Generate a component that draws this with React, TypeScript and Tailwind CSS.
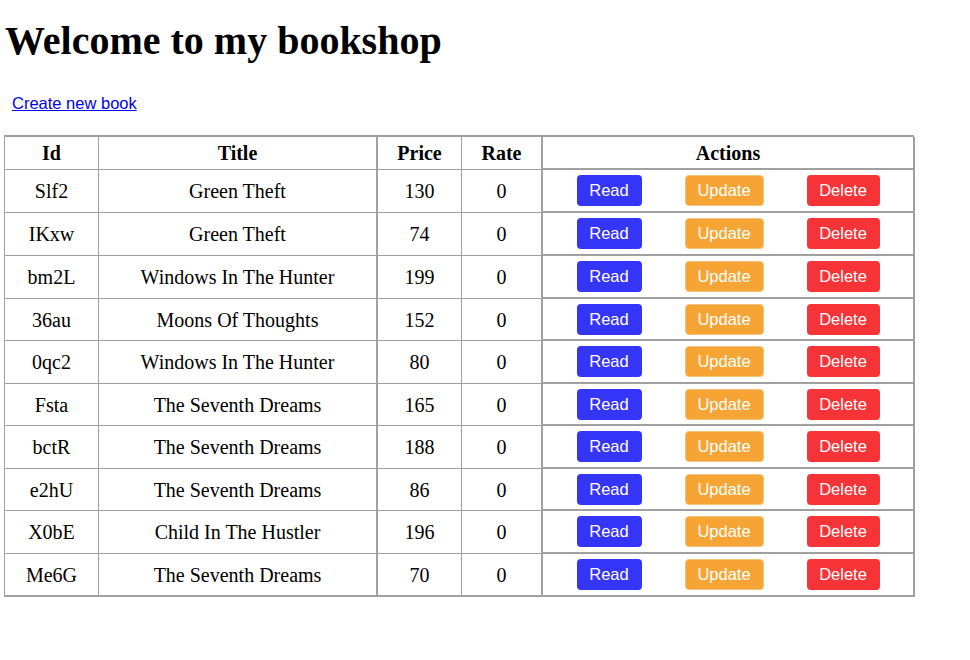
import React from "react";

const books = [
  { id: "Slf2", title: "Green Theft", price: 130, rate: 0 },
  { id: "IKxw", title: "Green Theft", price: 74, rate: 0 },
  { id: "bm2L", title: "Windows In The Hunter", price: 199, rate: 0 },
  { id: "36au", title: "Moons Of Thoughts", price: 152, rate: 0 },
  { id: "0qc2", title: "Windows In The Hunter", price: 80, rate: 0 },
  { id: "Fsta", title: "The Seventh Dreams", price: 165, rate: 0 },
  { id: "bctR", title: "The Seventh Dreams", price: 188, rate: 0 },
  { id: "e2hU", title: "The Seventh Dreams", price: 86, rate: 0 },
  { id: "X0bE", title: "Child In The Hustler", price: 196, rate: 0 },
  { id: "Me6G", title: "The Seventh Dreams", price: 70, rate: 0 },
];

const heights = [43, 43, 43, 42, 43, 42, 43, 42, 43, 43];

export default function App() {
  return (
    <div className="min-h-[660px] bg-white text-black" style={{ fontFamily: '"Liberation Serif", "Times New Roman", serif' }}>
      <h1 className="pl-[5px] pt-[18px] text-[40px] font-bold leading-[46px]">Welcome to my bookshop</h1>
      <div className="mt-[27px] pl-[12px]">
        <a href="#" className="text-[16.5px] text-[#0000ee] underline" style={{ fontFamily: '"Liberation Sans", Arial, sans-serif' }}>
          Create new book
        </a>
      </div>
      <div className="ml-[4px] mt-[19px] w-[910px] border-t-2 border-l border-[#a0a0a0]">
        <div className="grid grid-cols-[94px_279px_84px_81px_372px]">
          <div className="flex h-[33px] items-center justify-center border-b border-r border-[#a0a0a0] text-[20px] font-bold">Id</div>
          <div className="flex h-[33px] items-center justify-center border-b border-r-2 border-[#a0a0a0] text-[20px] font-bold">Title</div>
          <div className="flex h-[33px] items-center justify-center border-b border-r border-[#a0a0a0] text-[20px] font-bold">Price</div>
          <div className="flex h-[33px] items-center justify-center border-b border-r-2 border-[#a0a0a0] text-[20px] font-bold">Rate</div>
          <div className="flex h-[33px] items-center justify-center border-b-2 border-r-2 border-[#a0a0a0] text-[20px] font-bold">Actions</div>
        </div>
        {books.map((b, i) => (
          <div
            key={b.id}
            className={`grid grid-cols-[94px_279px_84px_81px_372px] ${heights[i] === 43 ? "h-[43px]" : "h-[42px]"}`}
          >
            <div className={`flex items-center justify-center border-r border-[#a0a0a0] text-[20px] ${i === 9 ? "border-b-2" : "border-b"}`}>{b.id}</div>
            <div className={`flex items-center justify-center border-r-2 border-[#a0a0a0] text-[20px] ${i === 9 ? "border-b-2" : "border-b"}`}>{b.title}</div>
            <div className={`flex items-center justify-center border-r border-[#a0a0a0] text-[20px] ${i === 9 ? "border-b-2" : "border-b"}`}>{b.price}</div>
            <div className={`flex items-center justify-center border-r-2 border-[#a0a0a0] text-[20px] ${i === 9 ? "border-b-2" : "border-b"}`}>{b.rate}</div>
            <div
              className="flex items-center justify-around border-b-2 border-r-2 border-[#a0a0a0] px-3 text-[16.5px] text-white"
              style={{ fontFamily: '"Liberation Sans", Arial, sans-serif' }}
            >
              <button className="flex h-[31px] w-[65px] items-center justify-center rounded-[4px] bg-[#3535f7]">Read</button>
              <button className="flex h-[31px] w-[79px] items-center justify-center rounded-[4px] border border-[#f3c27c] bg-[#f6a535]">Update</button>
              <button className="flex h-[31px] w-[73px] items-center justify-center rounded-[4px] bg-[#f63336]">Delete</button>
            </div>
          </div>
        ))}
      </div>
    </div>
  );
}
